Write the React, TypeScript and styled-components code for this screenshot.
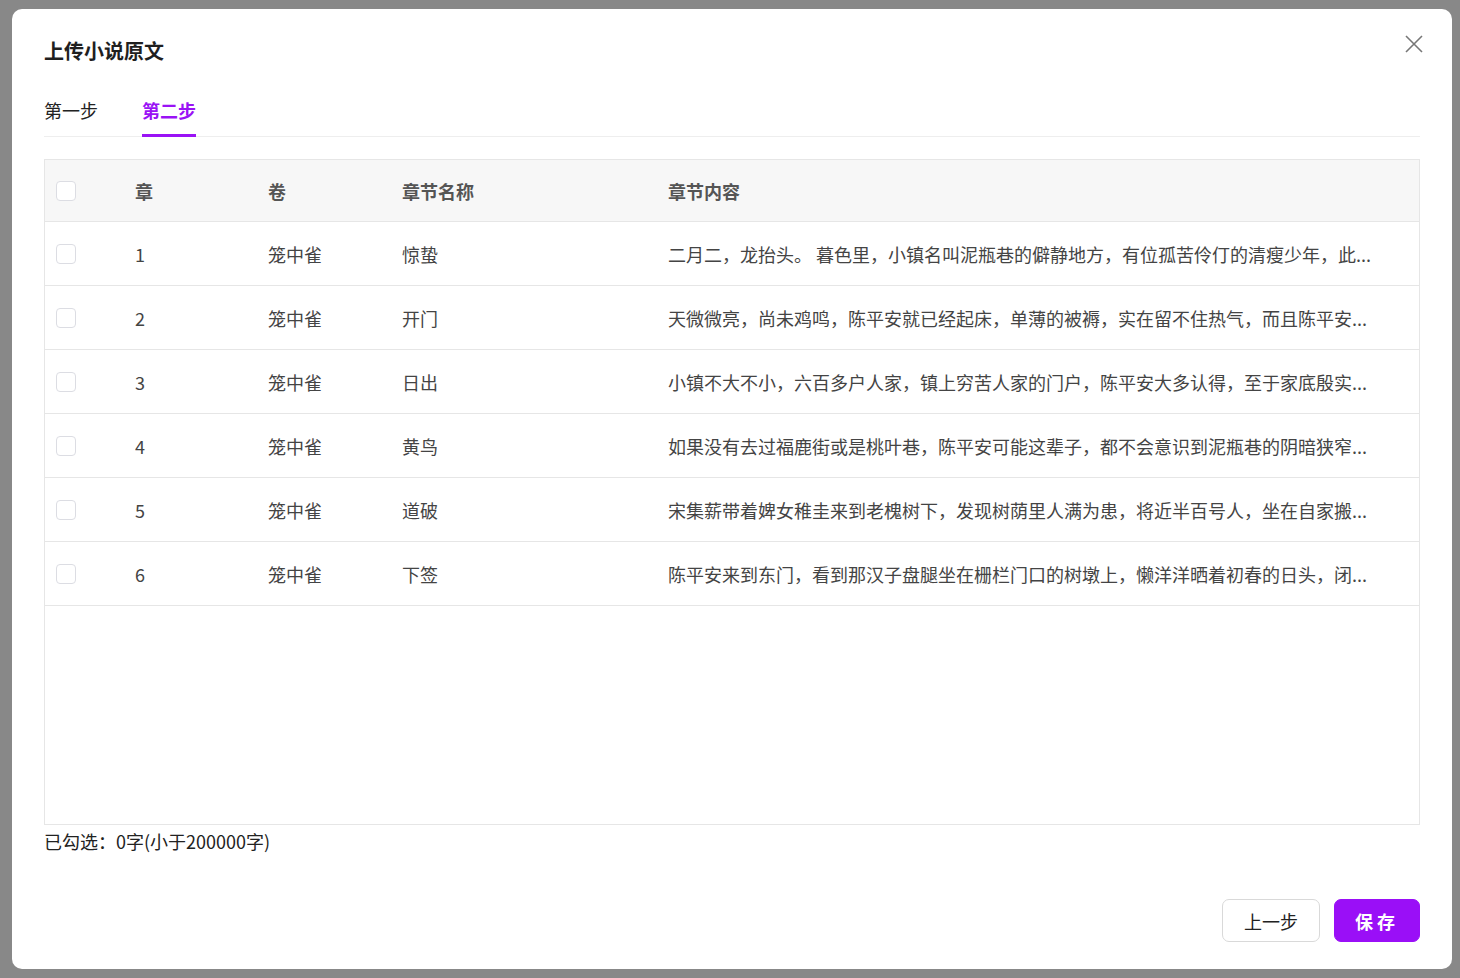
import React from "react";
import styled, { createGlobalStyle } from "styled-components";

const Global = createGlobalStyle`
  html, body { margin: 0; padding: 0; background: #888888; }
  body { font-family: "Noto Sans CJK SC", "Inter", sans-serif; }
`;
const Page = styled.div`
  width: 1460px; height: 978px; box-sizing: border-box; padding: 9px 8px 9px 12px;
`;
const Modal = styled.div`
  width: 1440px; height: 960px; background: #fff; border-radius: 10px; box-sizing: border-box;
  padding: 26px 32px 27px; display: flex; flex-direction: column; position: relative;
`;
const Title = styled.div`font-size: 20px; font-weight: 700; color: #1f1f1f; line-height: 32px;`;
const Close = styled.button`
  position: absolute; right: 28px; top: 25px; background: none; border: none; padding: 0; cursor: pointer;
`;
const Tabs = styled.div`display: flex; gap: 44px; margin-top: 20px; border-bottom: 1px solid #eeeeee;`;
const Tab = styled.div<{ $active?: boolean }>`
  font-size: 18px; line-height: 24px; padding: 11px 0 12px; color: ${p => p.$active ? "#9a12f5" : "#222"};
  font-weight: ${p => p.$active ? 600 : 400}; border-bottom: 3px solid ${p => p.$active ? "#9a12f5" : "transparent"};
  margin-bottom: -1px;
`;
const Table = styled.div`margin-top: 22px; border: 1px solid #e6e6e6; height: 666px; box-sizing: border-box; display: flex; flex-direction: column;`;
const Row = styled.div<{ $head?: boolean }>`
  display: grid; grid-template-columns: 90px 133px 134px 266px 1fr; align-items: center;
  height: ${p => p.$head ? 61 : 63}px; flex-shrink: 0; border-bottom: 1px solid #e6e6e6;
  background: ${p => p.$head ? "#f7f7f7" : "#fff"};
  font-size: 18px; color: ${p => p.$head ? "#555" : "#444"}; font-weight: ${p => p.$head ? 700 : 400};
`;
const Cell = styled.div`white-space: nowrap; overflow: hidden; padding-right: 10px;`;
const Check = styled.div`width: 18px; height: 18px; border: 1.5px solid #dcdde3; border-radius: 4px; margin-left: 11px; background: #fff;`;
const Summary = styled.div`font-size: 18px; color: #222; margin-top: 3px;`;
const Footer = styled.div`margin-top: auto; display: flex; justify-content: flex-end; gap: 14px;`;
const Btn = styled.button<{ $primary?: boolean }>`
  height: 43px; border-radius: 7px; font-size: 18px; font-family: inherit; cursor: pointer;
  padding: 0 20px; min-width: ${p => p.$primary ? 84 : 98}px;
  letter-spacing: ${p => p.$primary ? "4px" : "0"};
  background: ${p => p.$primary ? "#9a0ff7" : "#fff"}; color: ${p => p.$primary ? "#fff" : "#222"};
  border: 1px solid ${p => p.$primary ? "#9a0ff7" : "#d9d9d9"}; font-weight: ${p => p.$primary ? 600 : 400};
`;

const rows = [
  ["1", "笼中雀", "惊蛰", "二月二，龙抬头。 暮色里，小镇名叫泥瓶巷的僻静地方，有位孤苦伶仃的清瘦少年，此..."],
  ["2", "笼中雀", "开门", "天微微亮，尚未鸡鸣，陈平安就已经起床，单薄的被褥，实在留不住热气，而且陈平安..."],
  ["3", "笼中雀", "日出", "小镇不大不小，六百多户人家，镇上穷苦人家的门户，陈平安大多认得，至于家底殷实..."],
  ["4", "笼中雀", "黄鸟", "如果没有去过福鹿街或是桃叶巷，陈平安可能这辈子，都不会意识到泥瓶巷的阴暗狭窄..."],
  ["5", "笼中雀", "道破", "宋集薪带着婢女稚圭来到老槐树下，发现树荫里人满为患，将近半百号人，坐在自家搬..."],
  ["6", "笼中雀", "下签", "陈平安来到东门，看到那汉子盘腿坐在栅栏门口的树墩上，懒洋洋晒着初春的日头，闭..."],
];

export default function App() {
  return (
    <Page>
      <Global />
      <Modal>
        <Title>上传小说原文</Title>
        <Close aria-label="close">
          <svg width="20" height="20" viewBox="0 0 20 20"><path d="M2 2L18 18M18 2L2 18" stroke="#777" strokeWidth="1.6" /></svg>
        </Close>
        <Tabs><Tab>第一步</Tab><Tab $active>第二步</Tab></Tabs>
        <Table>
          <Row $head><Check /><Cell>章</Cell><Cell>卷</Cell><Cell>章节名称</Cell><Cell>章节内容</Cell></Row>
          {rows.map(r => (
            <Row key={r[0]}><Check /><Cell>{r[0]}</Cell><Cell>{r[1]}</Cell><Cell>{r[2]}</Cell><Cell>{r[3]}</Cell></Row>
          ))}
        </Table>
        <Summary>已勾选：0字(小于200000字)</Summary>
        <Footer><Btn>上一步</Btn><Btn $primary>保存</Btn></Footer>
      </Modal>
    </Page>
  );
}
